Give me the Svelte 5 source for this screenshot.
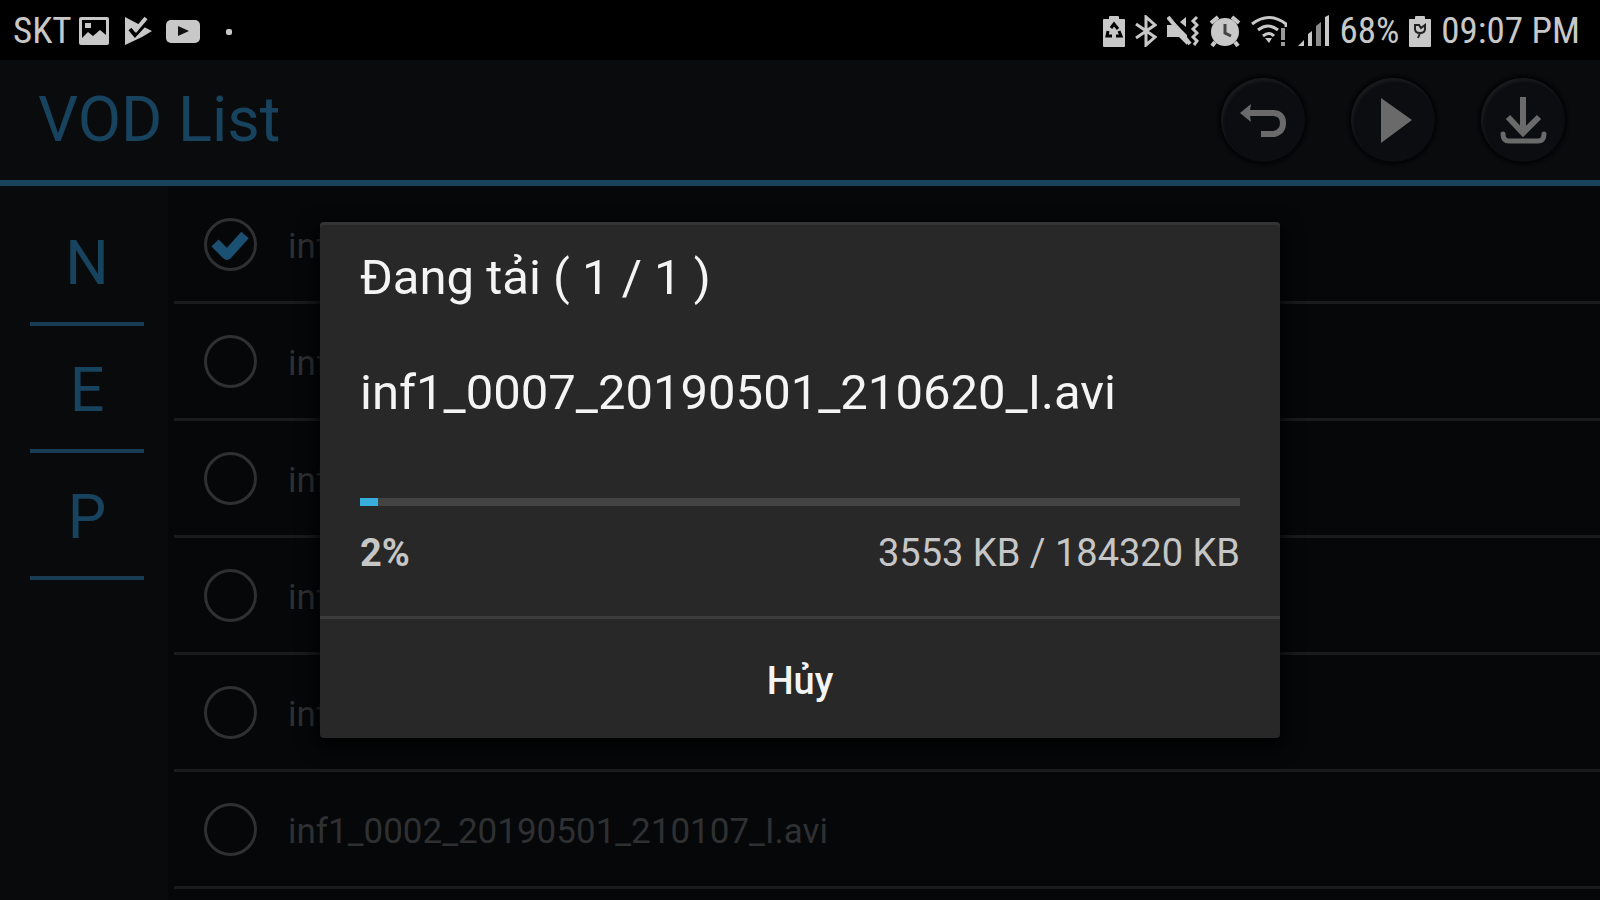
<script lang="ts">
  type Recording = { name: string; selected: boolean };

  const groups = ["N", "E", "P"];

  let recordings = $state<Recording[]>([
    { name: "inf1_0007_20190501_210620_I.avi", selected: true },
    { name: "inf1_0006_20190501_210520_I.avi", selected: false },
    { name: "inf1_0005_20190501_210420_I.avi", selected: false },
    { name: "inf1_0004_20190501_210320_I.avi", selected: false },
    { name: "inf1_0003_20190501_210207_I.avi", selected: false },
    { name: "inf1_0002_20190501_210107_I.avi", selected: false },
  ]);

  let download = $state({ file: "inf1_0007_20190501_210620_I.avi", done: 3553, total: 184320 });
  let percent = $derived(Math.ceil((download.done / download.total) * 100));
  let open = $state(true);
</script>

<div class="screen">
  <div class="status">
    <span>SKT</span>
    <div class="notices">
      <svg width="32" height="30" viewBox="0 0 32 30" aria-hidden="true">
        <path fill="currentColor" fill-rule="evenodd" d="M3 1h26q2 0 2 2v24q0 2-2 2H3q-2 0-2-2V3q0-2 2-2zM4 4v18l6-6 5 4 7-6 6 5V4zM7 7h6v5H7z" />
      </svg>
      <svg width="28" height="30" viewBox="0 0 28 30" aria-hidden="true">
        <path fill="currentColor" d="M1 1l17 9 10 5-10 6L1 29z" />
        <path d="M6 13l5 6 12-13" fill="none" stroke="#000" stroke-width="4" />
        <path d="M13 6l7-6 8 4-8 6z" fill="#000" />
        <path d="M7 8l5 6L22 2" fill="none" stroke="currentColor" stroke-width="4" />
      </svg>
      <svg width="34" height="30" viewBox="0 0 34 30" aria-hidden="true">
        <rect x="0" y="4" width="34" height="23" rx="5" fill="currentColor" />
        <path d="M12 10l11 5-11 5z" fill="#111" />
      </svg>
      <svg width="30" height="30" viewBox="0 0 30 30" aria-hidden="true">
        <rect x="12" y="13" width="6" height="6" rx="2" fill="currentColor" />
      </svg>
    </div>

    <div class="system">
      <svg width="22" height="32" viewBox="0 0 22 32" aria-hidden="true">
        <path d="M1 4h5V2q0-1 1-1h8q1 0 1 1v2h5q1 0 1 1v26q0 1-1 1H1q-1 0-1-1V5q0-1 1-1z" fill="currentColor" />
        <path d="M8 13l3-4 4 5M5 16l-1 5h5M13 21h5l-2-5" fill="none" stroke="#000" stroke-width="3" />
      </svg>
      <svg width="22" height="32" viewBox="0 0 22 32" aria-hidden="true">
        <path d="M1 9l19 13-9 8V2l9 8L1 23" fill="none" stroke="currentColor" stroke-width="3" />
      </svg>
      <svg width="32" height="32" viewBox="0 0 32 32" aria-hidden="true">
        <path d="M0 10h6l2-2 12 12v10l-8-8H0zM13 7l6-5v10z" fill="currentColor" />
        <path d="M1 2l22 27" fill="none" stroke="currentColor" stroke-width="4" />
        <path d="M30 2l-4 4 4 4-4 4 4 4-4 4 4 4-3 4" fill="none" stroke="currentColor" stroke-width="3" />
      </svg>
      <svg width="32" height="32" viewBox="0 0 32 32" aria-hidden="true">
        <circle cx="16" cy="17" r="14" fill="currentColor" />
        <path d="M2 8l7-6M30 8l-7-6M6 27l-3 4M26 27l3 4" stroke="currentColor" stroke-width="4" />
        <path d="M16 9v9l6 3" fill="none" stroke="#444" stroke-width="3" />
      </svg>
      <svg width="36" height="32" viewBox="0 0 36 32" aria-hidden="true">
        <path d="M1 9q17-13 34 0v3M7 15q10-8 20 0M12 21q6-5 11 0" fill="none" stroke="currentColor" stroke-width="3" />
        <path d="M14 23h7l-3 5z" fill="currentColor" />
        <path d="M32 13v12M32 27v4" stroke="#9a9a9a" stroke-width="4" />
      </svg>
      <svg width="32" height="32" viewBox="0 0 32 32" aria-hidden="true">
        <path d="M1 31l6-6v6zM11 19l4-3v15h-4zM28 2l4-2v31h-4z" fill="currentColor" />
        <path d="M19 11l5-4v24h-5z" fill="#8c8c8c" />
      </svg>
      <span>68%</span>
      <svg width="22" height="32" viewBox="0 0 22 32" aria-hidden="true">
        <path d="M1 4h5V2q0-1 1-1h8q1 0 1 1v2h5q1 0 1 1v26q0 1-1 1H1q-1 0-1-1V5q0-1 1-1z" fill="currentColor" />
        <path d="M6 10v4q0 4 5 4t5-4v-4l-4 3-2-3zM11 18l-2 5" fill="none" stroke="#222" stroke-width="2" />
      </svg>
      <time datetime="21:07">09:07 PM</time>
    </div>
  </div>

  <div class="app">
    <header class="toolbar">
      <h1>VOD List</h1>
      <div class="actions">
        <button type="button" class="round" aria-label="Back">
          <svg width="48" height="48" viewBox="0 0 48 48" aria-hidden="true">
            <path d="M8 17h27q9 1 9 10t-9 11H22" fill="none" stroke="currentColor" stroke-width="6" />
            <path d="M1 17l11-9q-2 9 0 18z" fill="currentColor" />
          </svg>
        </button>
        <button type="button" class="round" aria-label="Play">
          <svg width="48" height="48" viewBox="0 0 48 48" aria-hidden="true">
            <path d="M12 2l31 22-31 23z" fill="currentColor" />
          </svg>
        </button>
        <button type="button" class="round" aria-label="Download">
          <svg width="48" height="48" viewBox="0 0 48 48" aria-hidden="true">
            <path d="M24 1v35M9 21l15 16 16-16" fill="none" stroke="currentColor" stroke-width="6" />
            <path d="M4 38q0 7 6 7h29q6 0 6-7" fill="none" stroke="currentColor" stroke-width="5" stroke-linecap="round" />
          </svg>
        </button>
      </div>
    </header>

    <div class="body">
      <nav class="groups" aria-label="Recording type">
        {#each groups as group}
          <button type="button" class="group">{group}</button>
        {/each}
      </nav>

      <ul class="list">
        {#each recordings as recording}
          <li>
            <label class="row">
              <span class="tick">
                <input type="checkbox" bind:checked={recording.selected} />
                {#if recording.selected}
                  <svg width="53" height="53" viewBox="0 0 53 53" aria-hidden="true">
                    <path d="M11 25l12 12 18-20" fill="none" stroke="currentColor" stroke-width="10" stroke-linejoin="round" />
                  </svg>
                {/if}
              </span>
              <span class="name">{recording.name}</span>
            </label>
          </li>
        {/each}
      </ul>
    </div>

    {#if open}
      <div class="overlay">
        <div class="dialog" role="dialog" aria-modal="true" aria-labelledby="dialog-title">
          <div class="content">
            <h2 id="dialog-title">Đang tải ( 1 / 1 )</h2>
            <p class="file">{download.file}</p>
            <progress value={percent} max="100" aria-label={download.file}></progress>
            <div class="figures">
              <strong>{percent}%</strong>
              <span>{download.done} KB / {download.total} KB</span>
            </div>
          </div>
          <button type="button" class="cancel" onclick={() => (open = false)}>Hủy</button>
        </div>
      </div>
    {/if}
  </div>
</div>

<style>
  :global(body) {
    margin: 0;
    background: #000;
  }

  .screen {
    display: flex;
    flex-direction: column;
    height: 100vh;
    overflow: hidden;
    font-family: Roboto, "Noto Sans", sans-serif;
  }

  h1,
  h2,
  p,
  ul {
    margin: 0;
    padding: 0;
    font-weight: 400;
  }

  button {
    padding: 0;
    border: 0;
    background: none;
    font-family: inherit;
    cursor: pointer;
  }

  svg {
    display: block;
    flex: none;
  }

  .status {
    box-sizing: border-box;
    display: flex;
    align-items: center;
    gap: 6px;
    flex: none;
    height: 60px;
    padding: 2px 20px 0 13px;
    background: #000;
    color: #c8c8c8;
    font-family: "Roboto Condensed", Roboto, sans-serif;
    font-size: 37px;
    line-height: 44px;
  }

  .notices {
    display: flex;
    align-items: center;
    gap: 14px;
  }

  .system {
    display: flex;
    align-items: center;
    gap: 10px;
    margin-left: auto;
  }

  .app {
    position: relative;
    display: flex;
    flex-direction: column;
    flex: 1;
    min-height: 0;
    background: #050709;
  }

  .toolbar {
    display: flex;
    align-items: center;
    justify-content: space-between;
    flex: none;
    height: 120px;
    padding: 0 35px 0 38px;
    border-bottom: 6px solid #19425d;
    background: #0a0b0d;
  }

  h1 {
    color: #18435f;
    font-size: 63px;
    line-height: 72px;
  }

  .actions {
    display: flex;
    gap: 46px;
  }

  .round {
    display: flex;
    align-items: center;
    justify-content: center;
    width: 84px;
    height: 84px;
    border-radius: 50%;
    background: #0b0d10;
    box-shadow: 0 0 3px 3px #040506, inset 2px 3px 3px #191a1c;
    color: #6a6a6a;
  }

  .body {
    display: flex;
    flex: 1;
    min-height: 0;
  }

  .groups {
    display: flex;
    flex-direction: column;
    flex: none;
    width: 114px;
    padding: 13px 24px 0 30px;
    background: #090a0c;
  }

  .group {
    height: 127px;
    padding-top: 4px;
    border-bottom: 4px solid #173c53;
    color: #18435f;
    font-size: 61px;
    line-height: 72px;
  }

  .list {
    flex: 1;
    padding: 1px 0 0 6px;
    list-style: none;
  }

  .row {
    display: flex;
    align-items: center;
    gap: 31px;
    height: 114px;
    padding-left: 30px;
    border-bottom: 3px solid #1a1b1d;
    color: #2f3032;
    font-size: 35px;
    line-height: 44px;
  }

  .name {
    padding-top: 5px;
  }

  .tick {
    position: relative;
    flex: none;
    color: #1b5073;
  }

  .tick input {
    display: block;
    appearance: none;
    box-sizing: border-box;
    width: 53px;
    height: 53px;
    margin: 0;
    border: 3px solid #2f3032;
    border-radius: 50%;
  }

  .tick svg {
    position: absolute;
    inset: 0;
    pointer-events: none;
  }

  .overlay {
    position: absolute;
    inset: 0;
    display: flex;
    align-items: center;
    justify-content: center;
  }

  .dialog {
    width: 60%;
    overflow: hidden;
    border-radius: 4px;
    background: #282828;
    box-shadow: 0 6px 20px 2px #000, inset 0 3px 0 #343434;
    color: #f4f4f4;
  }

  .content {
    padding: 24px 40px 40px;
    border-bottom: 3px solid #3c3c3c;
  }

  h2,
  .file {
    font-size: 49px;
    line-height: 64px;
  }

  .file {
    margin-top: 51px;
  }

  progress {
    display: block;
    appearance: none;
    width: 100%;
    height: 8px;
    margin-top: 73px;
    border: 0;
    background: #434343;
  }

  progress::-webkit-progress-bar {
    background: #434343;
  }

  progress::-webkit-progress-value {
    background: #37aedb;
  }

  .figures {
    display: flex;
    justify-content: space-between;
    margin-top: 24px;
    color: #c6c6c6;
    font-size: 38px;
    line-height: 46px;
  }

  .cancel {
    display: block;
    width: 100%;
    height: 119px;
    padding-top: 5px;
    color: #f4f4f4;
    font-size: 38px;
    font-weight: 500;
    line-height: 46px;
  }
</style>
